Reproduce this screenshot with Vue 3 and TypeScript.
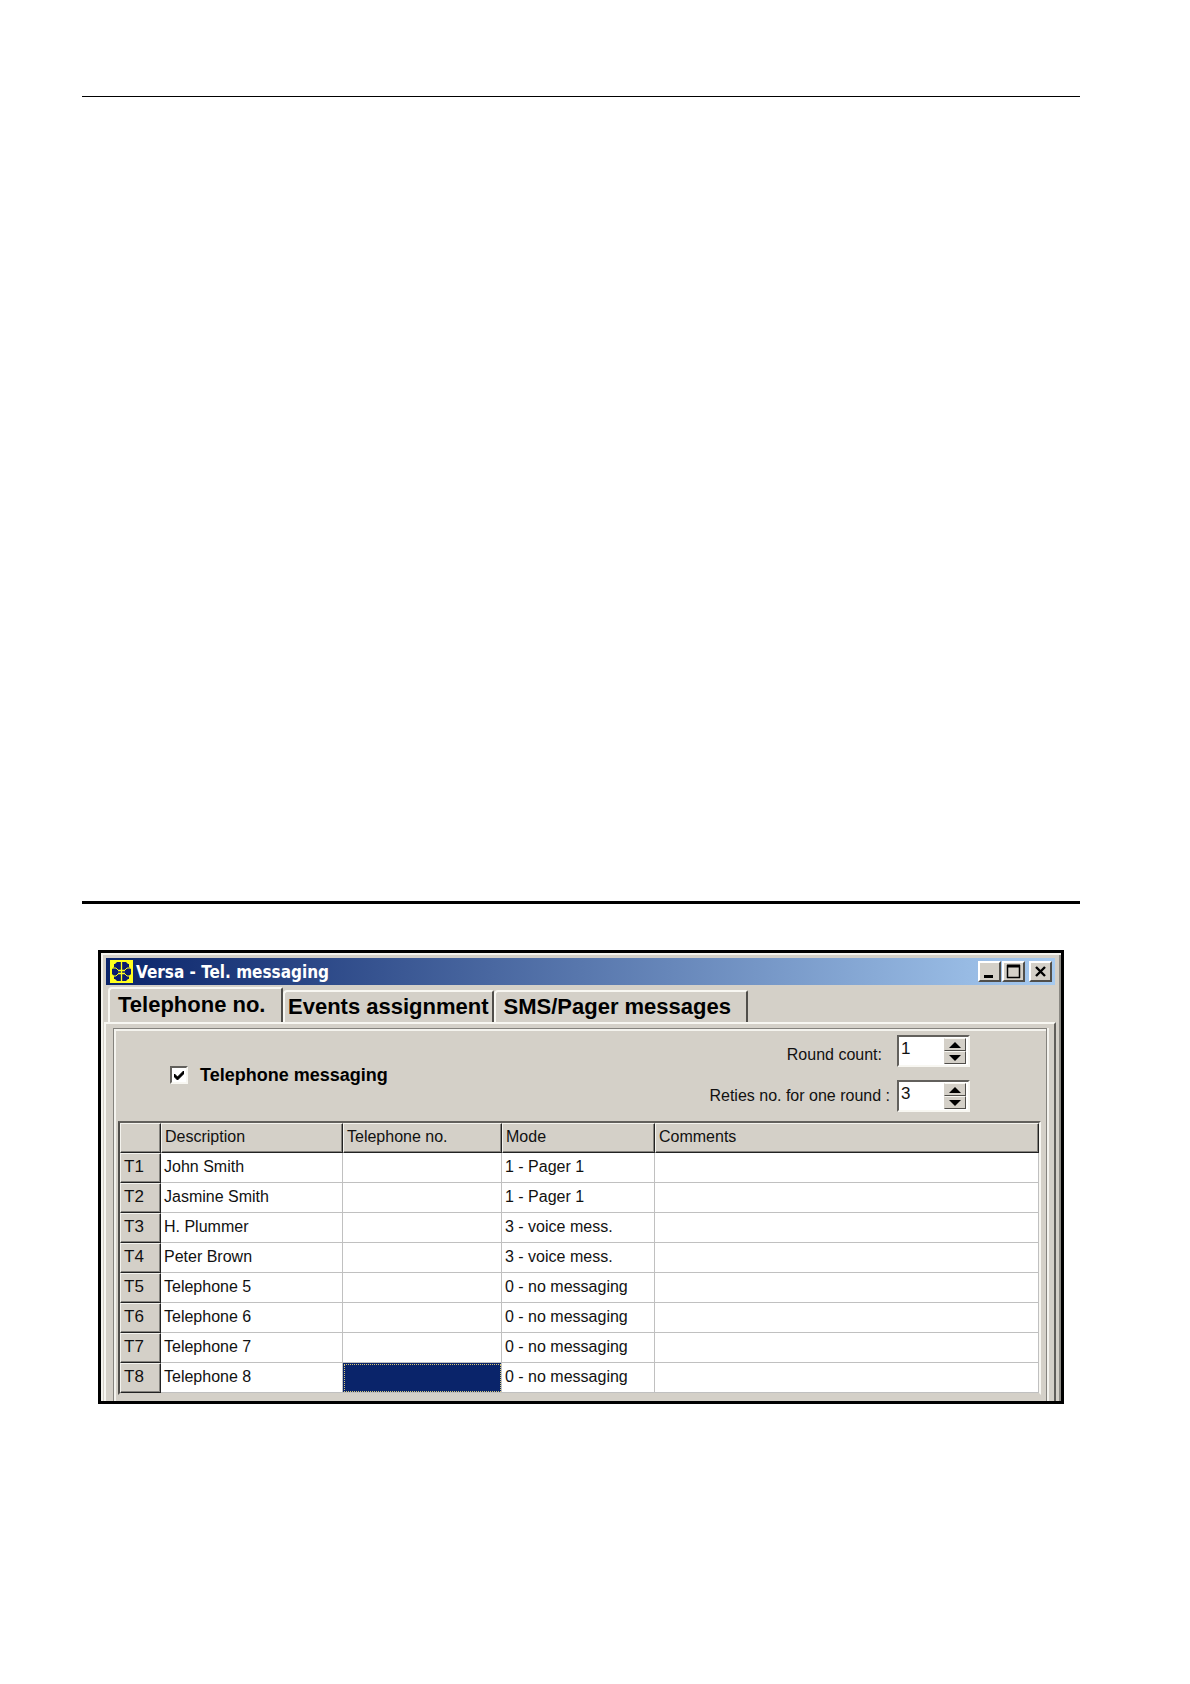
<script setup lang="ts">
import { ref } from 'vue'

interface Entry {
  id: string
  description: string
  phone: string
  mode: string
  comments: string
}

const tabs = ['Telephone no.', 'Events assignment', 'SMS/Pager messages']
const activeTab = ref(0)
const messagingEnabled = ref(true)

const counters = ref([
  { id: 'round-count', label: 'Round count:', value: 1 },
  { id: 'retries', label: 'Reties no. for one round :', value: 3 },
])

const entries: Entry[] = [
  ['John Smith', '1 - Pager 1'],
  ['Jasmine Smith', '1 - Pager 1'],
  ['H. Plummer', '3 - voice mess.'],
  ['Peter Brown', '3 - voice mess.'],
  ['Telephone 5', '0 - no messaging'],
  ['Telephone 6', '0 - no messaging'],
  ['Telephone 7', '0 - no messaging'],
  ['Telephone 8', '0 - no messaging'],
].map(([description, mode], i) => ({ id: `T${i + 1}`, description, phone: '', mode, comments: '' }))

const selectedId = ref('T8')
</script>

<template>
  <main class="page">
    <hr class="rule thin" />
    <hr class="rule thick" />

    <section class="frame">
      <div class="window">
        <header class="titlebar">
          <svg class="logo" viewBox="0 0 23 23" aria-hidden="true">
            <rect width="23" height="23" fill="#ffff1e" />
            <path d="M7 2h9l2 2h1v3l2 2v5l-2 2v3h-1l-2 2H7l-2-2H4v-3l-2-2V9l2-2V4h1z" fill="#0a1a6e" />
            <path d="M11.5 1v21M8 10.500h7M8 13.500h7" fill="none" stroke="#ffff1e" stroke-width="1.300" />
            <path d="M2 8h4l2 2M21 8h-4l-2 2M2 16h4l2-2M21 16h-4l-2-2" fill="none" stroke="#ffff1e" stroke-width="1" />
          </svg>
          <h1 class="title">Versa - Tel. messaging</h1>
          <div class="controls">
            <button type="button" class="control" aria-label="Minimize">
              <svg viewBox="0 0 19 17"><path d="M4 13.500h9" stroke="#000" stroke-width="3" /></svg>
            </button>
            <button type="button" class="control" aria-label="Maximize">
              <svg viewBox="0 0 19 17"><path d="M3.500 2v13M15.500 2v13M3 14.500h13" stroke="#000" stroke-width="1.500" /><path d="M3 3h13" stroke="#000" stroke-width="3" /></svg>
            </button>
            <button type="button" class="control close" aria-label="Close">
              <svg viewBox="0 0 19 17"><path d="M5 4l9 9M14 4l-9 9" stroke="#000" stroke-width="2.400" /></svg>
            </button>
          </div>
        </header>

        <nav class="tabs" role="tablist">
          <button
            v-for="(tab, i) in tabs"
            :key="tab"
            type="button"
            role="tab"
            class="tab"
            :class="{ active: i === activeTab }"
            :aria-selected="i === activeTab"
            @click="activeTab = i"
          >{{ tab }}</button>
        </nav>

        <div class="sheet">
          <div class="panel">
            <div class="settings">
              <label class="messaging">
                <input v-model="messagingEnabled" type="checkbox" class="check" />
                <span>Telephone messaging</span>
              </label>
              <div class="counters">
                <div v-for="c in counters" :key="c.id" class="counter">
                  <label :for="c.id">{{ c.label }}</label>
                  <div class="spin">
                    <input :id="c.id" v-model="c.value" type="text" class="value" />
                    <div class="arrows">
                      <button type="button" class="arrow" aria-label="Increase" @click="c.value++">
                        <svg viewBox="0 0 12 6"><path d="M6 0l6 6H0z" /></svg>
                      </button>
                      <button type="button" class="arrow" aria-label="Decrease" @click="c.value--">
                        <svg viewBox="0 0 12 6"><path d="M0 0h12L6 6z" /></svg>
                      </button>
                    </div>
                  </div>
                </div>
              </div>
            </div>

            <table class="grid">
              <colgroup>
                <col class="c-id" /><col class="c-desc" /><col class="c-phone" /><col class="c-mode" /><col />
              </colgroup>
              <thead>
                <tr>
                  <th></th>
                  <th scope="col">Description</th>
                  <th scope="col">Telephone no.</th>
                  <th scope="col">Mode</th>
                  <th scope="col">Comments</th>
                </tr>
              </thead>
              <tbody>
                <tr v-for="e in entries" :key="e.id">
                  <th scope="row">{{ e.id }}</th>
                  <td>{{ e.description }}</td>
                  <td :class="{ selected: e.id === selectedId }" @click="selectedId = e.id">{{ e.phone }}</td>
                  <td>{{ e.mode }}</td>
                  <td>{{ e.comments }}</td>
                </tr>
              </tbody>
            </table>
          </div>
        </div>
      </div>
    </section>
  </main>
</template>

<style>
body {
  margin: 0;
  background: #fff;
}
</style>

<style scoped>
* {
  box-sizing: border-box;
}
.page {
  padding: 96px 110px 280px 82px;
  font: 16px/20px "Liberation Sans", Arial, sans-serif;
  color: #111;
}
.rule {
  margin: 0;
  border: 0;
  background: #000;
}
.thin {
  height: 1px;
}
.thick {
  height: 3px;
  margin-top: 804px;
}
.frame {
  margin: 46px 16px 0;
  border: 3px solid #000;
}
.window {
  padding: 3px 5px 0 3px;
  background: #d4d0c8;
  box-shadow: inset 2px 2px #f4f3ee, inset -2px 0 #8a8882;
}
.titlebar {
  display: flex;
  align-items: center;
  height: 27px;
  margin: 2px 1px 0 2px;
  padding: 0 3px 0 4px;
  background: linear-gradient(90deg, #0a246a, #a6caf0);
}
.logo {
  width: 23px;
  height: 23px;
}
.title {
  flex: 1;
  margin: 0 0 0 3px;
  font: bold 17px/20px "DejaVu Sans Condensed", "DejaVu Sans", sans-serif;
  color: #fff;
}
.controls {
  display: flex;
  gap: 1px;
}
.control {
  width: 23px;
  height: 21px;
  padding: 0;
  border: 2px solid;
  border-color: #fff #504e4a #504e4a #fff;
  background: #d4d0c8;
}
.control svg {
  display: block;
  width: 19px;
  height: 17px;
}
.close {
  margin-left: 3px;
}
.tabs {
  display: flex;
  align-items: flex-end;
  height: 37px;
  padding: 2px 0 0 4px;
}
.tab {
  height: 32px;
  padding: 0 3px;
  border: 2px solid;
  border-color: #f8f7f2 #504e4a transparent #f8f7f2;
  border-bottom: 0;
  border-radius: 4px 2px 0 0;
  background: #d4d0c8;
  font: bold 22px/28px "Liberation Sans", Arial, sans-serif;
  text-align: left;
  color: #000;
}
.tab:nth-child(1) {
  min-width: 175px;
}
.tab:nth-child(3) {
  min-width: 254px;
  padding-left: 8px;
}
.tab.active {
  height: 35px;
  padding: 0 12px 2px 8px;
}
.sheet {
  padding: 4px 7px 0 7px;
  border: 2px solid;
  border-color: #f8f7f2 #605e5a transparent #f8f7f2;
  border-bottom: 0;
}
.panel {
  padding: 0 5px 6px 4px;
  border: 1px solid #85837e;
  border-bottom: 0;
  box-shadow: inset 2px 2px #f4f3ee, 2px 0 #f4f3ee;
}
.settings {
  display: flex;
  justify-content: space-between;
  height: 92px;
  padding: 6px 71px 0 52px;
}
.messaging {
  display: flex;
  align-items: center;
  gap: 12px;
  height: 80px;
  font-size: 18px;
  font-weight: bold;
  color: #000;
}
.check {
  appearance: none;
  width: 18px;
  height: 18px;
  margin: 0;
  border: 2px solid;
  border-color: #62605c #f8f7f2 #f8f7f2 #62605c;
  background: #fff;
}
.check:checked {
  background: #fff url("data:image/svg+xml,%3Csvg xmlns='http://www.w3.org/2000/svg' viewBox='0 0 14 14'%3E%3Cpath d='M2.500 6l3 3 6-6v3l-6 6-3-3z' stroke='%23000'/%3E%3C/svg%3E");
}
.counters {
  display: flex;
  flex-direction: column;
  gap: 13px;
}
.counter {
  display: flex;
  align-items: center;
  justify-content: flex-end;
  gap: 7px;
}
.counter:first-child {
  gap: 15px;
}
.counter:first-child label {
  padding-top: 8px;
}
.spin {
  display: flex;
  width: 73px;
  height: 32px;
  padding: 0 2px;
  border: 2px solid;
  border-color: #62605c #f8f7f2 #f8f7f2 #62605c;
  background: #fff;
}
.value {
  flex: 1;
  min-width: 0;
  height: 24px;
  padding: 0;
  border: 0;
  background: none;
  font: inherit;
  font-size: 17px;
  color: #111;
}
.arrows {
  display: flex;
  flex-direction: column;
  width: 22px;
  padding-top: 1px;
}
.arrow {
  display: flex;
  align-items: center;
  justify-content: center;
  height: 13px;
  padding: 0;
  border: 1px solid;
  border-color: #f8f7f2 #504e4a #504e4a #d4d0c8;
  background: #d4d0c8;
}
.arrow svg {
  width: 12px;
  height: 6px;
}
.grid {
  width: 100%;
  border: 2px solid;
  border-color: #62605c #f8f7f2 #d4d0c8 #504e4a;
  border-spacing: 0;
  table-layout: fixed;
  background: #fff;
}
.c-id {
  width: 41px;
}
.c-desc {
  width: 182px;
}
.c-phone {
  width: 159px;
}
.c-mode {
  width: 153px;
}
.grid th,
.grid td {
  height: 30px;
  padding: 0 3px 2px;
  font-weight: normal;
  text-align: left;
  border: solid #c0c0c0;
  border-width: 0 1px 1px 0;
}
.grid th {
  background: #d4d0c8;
  border: 1px solid;
  border-color: #f4f3ee #222 #222 #f4f3ee;
  box-shadow: inset -1px -1px #85837e;
}
.grid tbody th {
  font-size: 17px;
}
.grid td.selected {
  background: #0a246a;
  outline: 1px dotted #d6c878;
  outline-offset: -2px;
}
</style>
